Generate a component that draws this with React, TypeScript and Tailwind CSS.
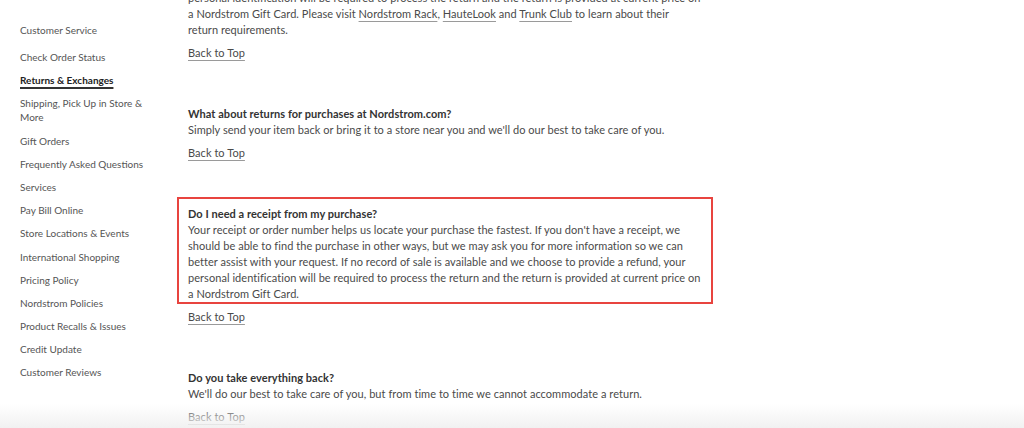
import React from "react";

const font = { fontFamily: "Lato, 'Noto Sans', sans-serif" };

const navItems: { label: React.ReactNode; active?: boolean }[] = [
  { label: "Check Order Status" },
  { label: "Returns & Exchanges", active: true },
  { label: (<>Shipping, Pick Up in Store &amp;<br />More</>) },
  { label: "Gift Orders" },
  { label: "Frequently Asked Questions" },
  { label: "Services" },
  { label: "Pay Bill Online" },
  { label: "Store Locations & Events" },
  { label: "International Shopping" },
  { label: "Pricing Policy" },
  { label: "Nordstrom Policies" },
  { label: "Product Recalls & Issues" },
  { label: "Credit Update" },
  { label: "Customer Reviews" },
];

function Link({ children }: { children: React.ReactNode }) {
  return (
    <a href="#" className="underline decoration-[#9a9a9a] underline-offset-[3px] decoration-1 text-[#4a4a4a]">
      {children}
    </a>
  );
}

function BackToTop() {
  return (
    <div className="mt-[5px] pl-[11px] leading-[16px] h-[16px]">
      <a href="#" className="text-[#4a4a4a] underline decoration-[#9a9a9a] underline-offset-[3px] decoration-1">
        Back to Top
      </a>
    </div>
  );
}

function Section({
  title,
  lines,
  highlight,
}: {
  title?: string;
  lines: React.ReactNode[];
  highlight?: boolean;
}) {
  return (
    <div>
      <div
        className={
          "w-[536px] border-2 px-[9px] pt-[7px] pb-0 " +
          (highlight ? "border-[#e8443f]" : "border-transparent")
        }
      >
        {title && <div className="font-bold text-[#333333] leading-[16px]">{title}</div>}
        {lines.map((l, i) => (
          <div key={i} className="leading-[16px] whitespace-nowrap">
            {l}
          </div>
        ))}
      </div>
      <BackToTop />
    </div>
  );
}

export default function App() {
  return (
    <div className="relative w-[1024px] h-[428px] overflow-hidden bg-white" style={font}>
      <div className="flex">
        <nav className="w-[177px] shrink-0 pl-[20px] pt-[23px] text-[10px] leading-[14px] text-[#555555]">
          <div className="mb-[13px]">Customer Service</div>
          <div className="flex flex-col gap-[9.2px]">
            {navItems.map((item, i) =>
              item.active ? (
                <div key={i} className="font-bold text-[#222222]">
                  <span className="underline decoration-2 underline-offset-[3px] decoration-[#333333]">
                    {item.label}
                  </span>
                </div>
              ) : (
                <div key={i}>{item.label}</div>
              )
            )}
          </div>
        </nav>
        <main className="-mt-[19px] text-[11px] tracking-[0.05px] text-[#4a4a4a] flex flex-col gap-[36px]">
          <Section
            lines={[
              "personal identification will be required to process the return and the return is provided at current price on",
              <>
                a Nordstrom Gift Card. Please visit <Link>Nordstrom Rack</Link>, <Link>HauteLook</Link> and{" "}
                <Link>Trunk Club</Link> to learn about their
              </>,
              "return requirements.",
            ]}
          />
          <Section
            title="What about returns for purchases at Nordstrom.com?"
            lines={["Simply send your item back or bring it to a store near you and we'll do our best to take care of you."]}
          />
          <Section
            highlight
            title="Do I need a receipt from my purchase?"
            lines={[
              "Your receipt or order number helps us locate your purchase the fastest. If you don't have a receipt, we",
              "should be able to find the purchase in other ways, but we may ask you for more information so we can",
              "better assist with your request. If no record of sale is available and we choose to provide a refund, your",
              "personal identification will be required to process the return and the return is provided at current price on",
              "a Nordstrom Gift Card.",
            ]}
          />
          <Section
            title="Do you take everything back?"
            lines={["We'll do our best to take care of you, but from time to time we cannot accommodate a return."]}
          />
        </main>
      </div>
      <div className="pointer-events-none absolute bottom-0 left-0 right-0 h-[24px] bg-gradient-to-b from-transparent to-[#f1f1f1]" />
    </div>
  );
}
